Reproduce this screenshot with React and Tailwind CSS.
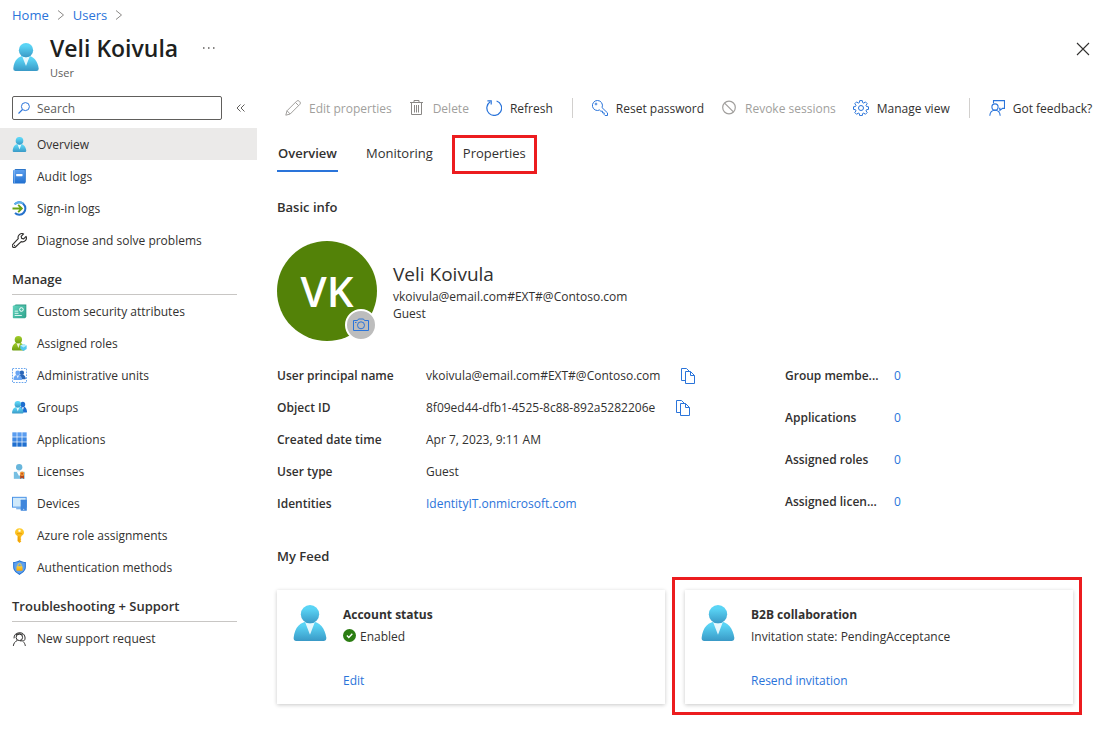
import React from 'react';

const font = 'font-["Segoe_UI","Open_Sans","Noto_Sans",sans-serif]';

function Gradients() {
  return (
    <svg className="absolute h-0 w-0" aria-hidden="true">
      <defs>
        <linearGradient id="cyan" x1="0" y1="0" x2="0" y2="1">
          <stop offset="0.2" stopColor="#5ad4f5" />
          <stop offset="1" stopColor="#3999c6" />
        </linearGradient>
        <linearGradient id="blue" x1="0" y1="0" x2="0" y2="1">
          <stop offset="0" stopColor="#5ea0ef" />
          <stop offset="1" stopColor="#1f6fd0" />
        </linearGradient>
        <linearGradient id="green" x1="0" y1="0" x2="0" y2="1">
          <stop offset="0" stopColor="#a4cf2b" />
          <stop offset="1" stopColor="#6fa012" />
        </linearGradient>
        <linearGradient id="teal" x1="0" y1="0" x2="1" y2="1">
          <stop offset="0" stopColor="#62d3bd" />
          <stop offset="1" stopColor="#2fa58e" />
        </linearGradient>
        <linearGradient id="gold" x1="0" y1="0" x2="0" y2="1">
          <stop offset="0" stopColor="#ffd033" />
          <stop offset="1" stopColor="#f7a600" />
        </linearGradient>
      </defs>
    </svg>
  );
}

function Svg({ className = 'size-[15px]', box = '0 0 18 18', children }) {
  return (
    <svg className={`${className} shrink-0`} viewBox={box} fill="none" aria-hidden="true">
      {children}
    </svg>
  );
}

const BODY =
  'M15.72 18a1.45 1.45 0 0 0 1.45-1.45.47.47 0 0 0 0-.17C16.59 11.81 14 8.09 9 8.09S1.34 11.24.83 16.39A1.46 1.46 0 0 0 2.14 18Z';
const COLLAR = 'M9 9.17a4.59 4.59 0 0 1-2.48-.73L9 14.86l2.44-6.38A4.53 4.53 0 0 1 9 9.17Z';

function Figure({ fill = 'url(#cyan)' }) {
  return (
    <>
      <path d={BODY} fill={fill} />
      <path d={COLLAR} fill="#fff" fillOpacity="0.85" />
      <circle cx="9" cy="4.59" r="4.59" fill={fill} />
    </>
  );
}

function PersonIcon({ className }) {
  return (
    <Svg className={className}>
      <Figure />
    </Svg>
  );
}

const AuditIcon = () => (
  <Svg>
    <path d="M2.500 1.500 4 0h12.600v15.800L15 17.500z" fill="#2d76c9" />
    <rect x="1.200" y="1.200" width="14.200" height="16.300" rx="0.800" fill="url(#blue)" />
    <path d="M2.800 1.200v16.300" stroke="#9cc5f5" strokeWidth="0.800" />
    <rect x="5" y="6" width="7.600" height="2.600" rx="0.400" fill="#fff" />
  </Svg>
);

const SignInIcon = () => (
  <Svg>
    <path d="M3.200 4A7.400 7.400 0 1 1 3.600 14.400" stroke="#2672cc" strokeWidth="2.400" />
    <path d="M3.200 4A7.400 7.400 0 0 1 13.500 3.100" stroke="#5fb0ea" strokeWidth="2.400" />
    <path d="M.6 9h10.600M7.400 4.600 11.800 9l-4.400 4.400" stroke="#6aa313" strokeWidth="2.200" />
  </Svg>
);

const WrenchIcon = () => (
  <Svg>
    <path
      d="M16.900 4.100 14 7l-2.400-.6L11 4l2.900-2.900a4.700 4.700 0 0 0-6.400 5.700L1 13.600a2.200 2.200 0 0 0 3.200 3.200l6.800-6.400a4.700 4.700 0 0 0 5.900-6.300Z"
      stroke="#323130"
      strokeWidth="1.400"
      strokeLinejoin="round"
    />
    <circle cx="3" cy="15" r="0.800" fill="#323130" />
  </Svg>
);

const AttributesIcon = () => (
  <Svg>
    <path d="M2.600 2 4.400.6h12.800v14.600l-1.600 1.600z" fill="#2f9b86" />
    <rect x="1" y="1.800" width="15.200" height="15.200" rx="0.800" fill="url(#teal)" />
    <circle cx="11.300" cy="6.600" r="2.200" stroke="#fff" strokeWidth="1.200" />
    <path d="M3.200 8.600h4.200M3.200 11.200h4.600M3.200 13.800h8.600" stroke="#e6faf6" strokeWidth="1.100" />
  </Svg>
);

const RolesIcon = () => (
  <Svg>
    <g transform="translate(-1 0) scale(0.96)">
      <Figure fill="url(#green)" />
    </g>
    <path d="m13.800 9.600 3.800 1.900v4L13.800 18 10 15.500v-4z" fill="#50c8ee" />
    <path d="m13.800 9.600 3.800 1.900-3.800 2.200-3.800-2.200z" fill="#b5ecfb" />
  </Svg>
);

const UnitsIcon = () => (
  <Svg>
    <rect x="0.600" y="0.600" width="16.800" height="16.800" stroke="#6aa6ee" strokeWidth="1.200" strokeDasharray="2 1.400" />
    <g transform="translate(6.600 3) scale(0.580)">
      <path d={BODY} fill="#2a66b8" />
      <circle cx="9" cy="4.590" r="4.590" fill="#2a66b8" />
    </g>
    <g transform="translate(1.200 3) scale(0.640)">
      <Figure fill="#6ba6f2" />
    </g>
  </Svg>
);

const GroupsIcon = () => (
  <Svg>
    <g transform="translate(7.400 2) scale(0.620 0.720)">
      <Figure fill="#1f6fd0" />
    </g>
    <g transform="translate(-0.600 1.200) scale(0.840)">
      <Figure />
    </g>
  </Svg>
);

const AppsIcon = () => (
  <Svg>
    {[0.4, 6.4, 12.4].map((y, row) =>
      [0.4, 6.4, 12.4].map((x) => (
        <rect key={`${x}-${y}`} x={x} y={y} width="5.200" height="5.200" fill={['#5a9df0', '#3f88e2', '#1f6fd0'][row]} />
      ))
    )}
  </Svg>
);

const LicenseIcon = () => (
  <Svg>
    <circle cx="8.600" cy="3.900" r="3.800" fill="#68b6dc" />
    <path d="M2.200 9.400h13v8.400h-13z" fill="#77bfe2" />
    <path d="m5.600 9.200 3 5.400 3-5.400z" fill="#fff" />
    <path d="M9.800 12.600h4.600V18l-2.300-1.600L9.800 18z" fill="#b8461b" />
    <circle cx="12.100" cy="11.800" r="2.700" fill="#f19a38" />
    <circle cx="12.100" cy="11.800" r="1.200" fill="#c9551d" />
  </Svg>
);

const DevicesIcon = () => (
  <Svg>
    <rect x="0.600" y="1.600" width="16.400" height="11.800" fill="#cfe9fb" stroke="#4b93e6" strokeWidth="1.200" />
    <path d="M5 13.400h6V16H5z" fill="#7db4ec" />
    <rect x="10.400" y="4.600" width="7.400" height="13" rx="0.600" fill="#3f86dc" />
    <circle cx="14.100" cy="16" r="0.600" fill="#fff" />
  </Svg>
);

const GoldKeyIcon = () => (
  <Svg>
    <path
      d="M9 .2c-3.200 0-5.400 2.200-5.400 4.900 0 2 1.100 3.600 3 4.400v6.200L9 17.900l2.200-2-1-1.300 1-1.300-1-1.300 1-1.200V9.500c2.100-.8 3.200-2.400 3.200-4.400C14.400 2.400 12.200.2 9 .2Z"
      fill="url(#gold)"
    />
    <circle cx="9" cy="3.200" r="1.400" fill="#fff" />
    <path d="M6 6.800h6M8.200 10v5.600" stroke="#e39300" strokeWidth="0.900" />
  </Svg>
);

const ShieldIcon = () => (
  <Svg>
    <path d="M9 .2c2.200 1.600 4.600 2 7.600 2.100v6.200c0 4.700-4.600 7.800-7.600 9.400-3-1.600-7.600-4.700-7.600-9.400V2.300C4.400 2.200 6.800 1.800 9 .2Z" fill="#1f6fd0" />
    <path d="M9 1.600c2 1.200 4 1.700 6.400 1.800v5.200c0 3.800-3.700 6.400-6.400 7.900-2.700-1.500-6.400-4.100-6.400-7.900V3.400C5 3.300 7 2.800 9 1.600Z" fill="#5ea0ef" />
    <path d="M7 8V6.400a2 2 0 0 1 4 0V8" stroke="#ffd033" strokeWidth="1.200" />
    <rect x="5.400" y="7.600" width="7.200" height="5.400" rx="0.500" fill="url(#gold)" />
  </Svg>
);

const SupportIcon = () => (
  <Svg>
    <g stroke="#323130" strokeWidth="1.200">
      <circle cx="8.800" cy="7.600" r="3.900" />
      <path d="M2.400 8.800A6.700 6.700 0 0 1 15.600 7.200v2.600c0 1.300-1.400 2-3.200 2H9.600" />
      <path d="M1.600 17.900c.4-3.200 2.200-5.400 4.800-6.600M16 17.900c-.3-2-1.100-3.700-2.600-5.200" />
      <path d="M4.800 4.600C7 3 10.800 3 13 4.800" />
    </g>
  </Svg>
);

const PencilIcon = () => (
  <Svg className="size-4" box="0 0 16 16">
    <path d="M.8 15.200 2 10.800 11.600 1.200a1.900 1.900 0 0 1 2.700 0l.5.5a1.900 1.900 0 0 1 0 2.700L5.200 14zM10.400 2.400l3.200 3.200M2 10.800 5.200 14" stroke="#a19f9d" />
  </Svg>
);

const TrashIcon = () => (
  <Svg className="size-4" box="0 0 16 16">
    <path d="M1 2.500h13M5 2.500v-2h5v2M2.500 2.500v12h10v-12M5.500 5v7.500M7.500 5v7.500M9.500 5v7.500" stroke="#8a8886" />
  </Svg>
);

const RefreshIcon = () => (
  <Svg className="size-4" box="0 0 16 16">
    <path d="M10.600 1A7.400 7.400 0 1 1 4.200 1.800" stroke="#2a74da" strokeWidth="1.200" />
    <path d="M1.400.8h3.800v3.800" stroke="#2a74da" strokeWidth="1.200" />
  </Svg>
);

const KeyIcon = () => (
  <Svg className="size-4" box="0 0 16 16">
    <path
      d="M5.500.5a5 5 0 1 0 2.100 9.500l1.200 1.200h1.700v1.700h1.700v1.700l.9.900h2.400v-2.600L10 7.600A5 5 0 0 0 5.500.5Z"
      stroke="#2a74da"
    />
    <circle cx="4" cy="4" r="0.900" stroke="#2a74da" strokeWidth="0.900" />
  </Svg>
);

const BlockIcon = () => (
  <Svg className="size-4" box="0 0 16 16">
    <circle cx="8" cy="7.500" r="6.300" stroke="#a19f9d" strokeWidth="1.200" />
    <path d="m3.600 3.100 8.800 8.800" stroke="#a19f9d" strokeWidth="1.200" />
  </Svg>
);

const GearIcon = () => (
  <Svg className="size-4" box="0 0 16 16">
    <path
      d="M6.700.6h2.600l.3 2 1.200.5 1.600-1.200 1.800 1.800-1.200 1.600.5 1.200 2 .3v2.600l-2 .3-.5 1.200 1.200 1.600-1.800 1.800-1.600-1.200-1.200.5-.3 2H6.700l-.3-2-1.200-.5-1.600 1.200-1.800-1.800 1.200-1.600-.5-1.200-2-.3V6.800l2-.3.5-1.200-1.200-1.600 1.800-1.800 1.600 1.200 1.200-.5z"
      stroke="#2a74da"
      strokeLinejoin="round"
    />
    <circle cx="8" cy="8" r="2.500" stroke="#2a74da" />
  </Svg>
);

const FeedbackIcon = () => (
  <Svg className="size-4" box="0 0 16 16">
    <g stroke="#2a74da" strokeWidth="1.100">
      <path d="M4.500 3.200V.6h11v7.800h-2l-2.600 2V8.400h-.8" />
      <circle cx="6" cy="7" r="3.100" />
      <path d="M.8 15.800C1 12.600 3 10.300 6 10.300s5 2.300 5.200 5.500" />
    </g>
  </Svg>
);

const CameraIcon = () => (
  <Svg className="h-3.5 w-4" box="0 0 16 14">
    <path d="M.5 2.500h4L5.500 1h5l1 1.500h4v10H.5z" stroke="#2a74da" />
    <circle cx="8" cy="7.300" r="3.500" stroke="#2a74da" />
    <path d="M2 4.500h1.500" stroke="#2a74da" />
  </Svg>
);

const CopyIcon = () => (
  <Svg className="size-4" box="0 0 16 16">
    <path d="M5.500 3.500h5l4 4v8h-9zM10.500 3.500v4h4" stroke="#2a74da" />
    <path d="M5.500 12.500h-4V.500h5l3 3" stroke="#2a74da" />
  </Svg>
);

const CheckIcon = () => (
  <Svg className="size-[13px]" box="0 0 13 13">
    <circle cx="6.500" cy="6.500" r="6.500" fill="#2b7d12" />
    <path d="m3.900 6.600 1.900 1.900 3.500-3.700" stroke="#fff" strokeWidth="1.400" />
  </Svg>
);

const Crumb = () => (
  <Svg className="h-2.5 w-2" box="0 0 8 10">
    <path d="m1 .5 5.500 4.500L1 9.500" stroke="#8a8886" />
  </Svg>
);

function NavList({ items }) {
  return (
    <ul>
      {items.map(([label, Icon, active]) => (
        <li key={label}>
          <a
            href="#"
            aria-current={active ? 'page' : undefined}
            className={`flex h-8 items-center gap-2.5 px-3 ${active ? 'bg-[#ebeae9]' : ''}`}
          >
            <Icon />
            <span className="pt-0.5">{label}</span>
          </a>
        </li>
      ))}
    </ul>
  );
}

function NavHeading({ children }) {
  return (
    <h2 className="ml-3 mr-5 flex h-[39px] items-center border-b border-[#c8c6c4] pt-2 text-[13px] font-semibold">
      {children}
    </h2>
  );
}

function Tool({ icon: Icon, children, disabled }) {
  return (
    <button type="button" disabled={disabled} className={`flex items-center gap-2 ${disabled ? 'text-[#a19f9d]' : ''}`}>
      <Icon />
      <span className="pt-0.5">{children}</span>
    </button>
  );
}

const Divider = () => <span className="mx-0.5 h-5 w-px bg-[#d2d0ce]" />;

function Row({ label, children, copy }) {
  return (
    <div className="flex h-8 items-center">
      <dt className="w-[149px] shrink-0 font-semibold">{label}</dt>
      <dd className="flex items-center gap-5">
        {children}
        {copy && (
          <button type="button" aria-label={`Copy ${label}`}>
            <CopyIcon />
          </button>
        )}
      </dd>
    </div>
  );
}

function Card({ title, action, children, highlight }) {
  return (
    <article className="relative flex gap-[15px] bg-white px-[15px] pt-[15px] pb-[13px] shadow-[0_1px_4px_rgba(0,0,0,0.22)]">
      {highlight && (
        <span className="pointer-events-none absolute -top-[13px] -right-[9px] -bottom-[11px] -left-[13px] border-3 border-[#ec1c1f]" />
      )}
      <PersonIcon className="size-9" />
      <div className="flex flex-col">
        <h3 className="h-[22px] leading-5 font-bold">{title}</h3>
        <p className="flex h-11 items-start gap-1 leading-5">{children}</p>
        <a href="#" className="leading-5 text-[#2a74da]">
          {action}
        </a>
      </div>
    </article>
  );
}

export default function App() {
  return (
    <div className={`${font} min-h-screen bg-white text-xs leading-[18px] whitespace-nowrap text-[#323130]`}>
      <Gradients />
      <nav aria-label="Breadcrumb" className="flex h-[30px] items-center gap-2 px-3 text-[13px] text-[#2a74da]">
        <a href="#">Home</a>
        <Crumb />
        <a href="#">Users</a>
        <Crumb />
      </nav>

      <header className="flex h-[58px] items-start px-3">
        <PersonIcon className="mt-[13px] size-7" />
        <div className="ml-2.5">
          <h1 className="text-[23px] leading-9 font-semibold text-[#201f1e]">Veli Koivula</h1>
          <p className="text-[11px] leading-3.5 text-[#605e5c]">User</p>
        </div>
        <button type="button" aria-label="More" className="mt-4 ml-6">
          <Svg className="h-1 w-4" box="0 0 16 4">
            <path d="M1 2h1.500M6 2h1.500M11 2h1.500" stroke="#605e5c" strokeWidth="1.500" />
          </Svg>
        </button>
        <button type="button" aria-label="Close" className="mt-3 mr-[5px] ml-auto">
          <Svg className="size-3.5" box="0 0 14 14">
            <path d="m1 1 12 12M13 1 1 13" stroke="#323130" strokeWidth="1.100" />
          </Svg>
        </button>
      </header>

      <div className="flex items-start">
        <aside className="w-[257px] shrink-0">
          <div className="flex h-10 items-start gap-3.5 pt-2 pl-3">
            <label className="flex h-6 w-[210px] shrink-0 items-center gap-[7px] rounded-xs border border-[#605e5c] px-[5px]">
              <Svg className="size-3" box="0 0 12 12">
                <circle cx="7.400" cy="4.600" r="4" stroke="#2a74da" />
                <path d="M4.500 7.500.5 11.500" stroke="#2a74da" strokeWidth="1.100" />
              </Svg>
              <input
                type="search"
                aria-label="Search"
                placeholder="Search"
                className="w-full min-w-0 pt-0.5 outline-none placeholder:text-[#605e5c]"
              />
            </label>
            <button type="button" aria-label="Collapse menu" className="mt-2">
              <Svg className="h-2 w-2.5" box="0 0 10 8">
                <path d="M4.500.5 1 4l3.500 3.500M8.500.5 5 4l3.500 3.500" stroke="#605e5c" />
              </Svg>
            </button>
          </div>
          <nav aria-label="User">
            <NavList
              items={[
                ['Overview', PersonIcon, true],
                ['Audit logs', AuditIcon],
                ['Sign-in logs', SignInIcon],
                ['Diagnose and solve problems', WrenchIcon],
              ]}
            />
            <NavHeading>Manage</NavHeading>
            <NavList
              items={[
                ['Custom security attributes', AttributesIcon],
                ['Assigned roles', RolesIcon],
                ['Administrative units', UnitsIcon],
                ['Groups', GroupsIcon],
                ['Applications', AppsIcon],
                ['Licenses', LicenseIcon],
                ['Devices', DevicesIcon],
                ['Azure role assignments', GoldKeyIcon],
                ['Authentication methods', ShieldIcon],
              ]}
            />
            <NavHeading>Troubleshooting + Support</NavHeading>
            <NavList items={[['New support request', SupportIcon]]} />
          </nav>
        </aside>

        <main className="min-w-0 flex-1 pl-5">
          <div className="flex h-10 items-center gap-[17px] pl-2">
            <Tool icon={PencilIcon} disabled>Edit properties</Tool>
            <Tool icon={TrashIcon} disabled>Delete</Tool>
            <Tool icon={RefreshIcon}>Refresh</Tool>
            <Divider />
            <Tool icon={KeyIcon}>Reset password</Tool>
            <Tool icon={BlockIcon} disabled>Revoke sessions</Tool>
            <Tool icon={GearIcon}>Manage view</Tool>
            <Divider />
            <Tool icon={FeedbackIcon}>Got feedback?</Tool>
          </div>

          <div role="tablist" className="mt-[7px] flex h-[39px] items-start text-[13px]">
            <button type="button" role="tab" aria-selected="true" className="h-[37px] border-b-2 border-[#2a74da] px-px font-semibold">
              Overview
            </button>
            <button type="button" role="tab" aria-selected="false" className="ml-7 h-[37px] border-b-2 border-transparent">
              Monitoring
            </button>
            <button type="button" role="tab" aria-selected="false" className="ml-[19px] h-[39px] border-3 border-[#ec1c1f] px-2 pb-1">
              Properties
            </button>
          </div>

          <h2 className="mt-6 text-[13px] font-semibold">Basic info</h2>
          <section className="mt-[25px] flex items-center gap-4">
            <div className="relative flex size-[100px] items-center justify-center rounded-full bg-[#538208] text-[42px] font-semibold text-white">
              VK
              <button
                type="button"
                aria-label="Change photo"
                className="absolute right-0 bottom-0 flex size-8 items-center justify-center rounded-full border-2 border-white bg-[#bdbdbd]"
              >
                <CameraIcon />
              </button>
            </div>
            <div className="leading-[17px]">
              <p className="text-[19px] leading-7">Veli Koivula</p>
              <p>vkoivula@email.com#EXT#@Contoso.com</p>
              <p>Guest</p>
            </div>
          </section>

          <section className="mt-[19px] flex items-start">
            <dl className="w-[508px] shrink-0">
              <Row label="User principal name" copy>vkoivula@email.com#EXT#@Contoso.com</Row>
              <Row label="Object ID" copy>8f09ed44-dfb1-4525-8c88-892a5282206e</Row>
              <Row label="Created date time">Apr 7, 2023, 9:11 AM</Row>
              <Row label="User type">Guest</Row>
              <Row label="Identities">
                <a href="#" className="text-[#2a74da]">IdentityIT.onmicrosoft.com</a>
              </Row>
            </dl>
            <dl className="flex flex-col gap-2.5">
              {['Group membe...', 'Applications', 'Assigned roles', 'Assigned licen...'].map((label) => (
                <div key={label} className="flex h-8 items-center gap-3">
                  <dt className="w-[97px] font-semibold">{label}</dt>
                  <dd>
                    <a href="#" className="text-[#2a74da]">0</a>
                  </dd>
                </div>
              ))}
            </dl>
          </section>

          <h2 className="mt-[27px] text-[13px] font-semibold">My Feed</h2>
          <section className="mt-[25px] mr-[34px] grid grid-cols-2 gap-5 pb-7">
            <Card title="Account status" action="Edit">
              <span className="mt-0.5 flex">
                <CheckIcon />
              </span>
              Enabled
            </Card>
            <Card title="B2B collaboration" action="Resend invitation" highlight>
              Invitation state: PendingAcceptance
            </Card>
          </section>
        </main>
      </div>
    </div>
  );
}
